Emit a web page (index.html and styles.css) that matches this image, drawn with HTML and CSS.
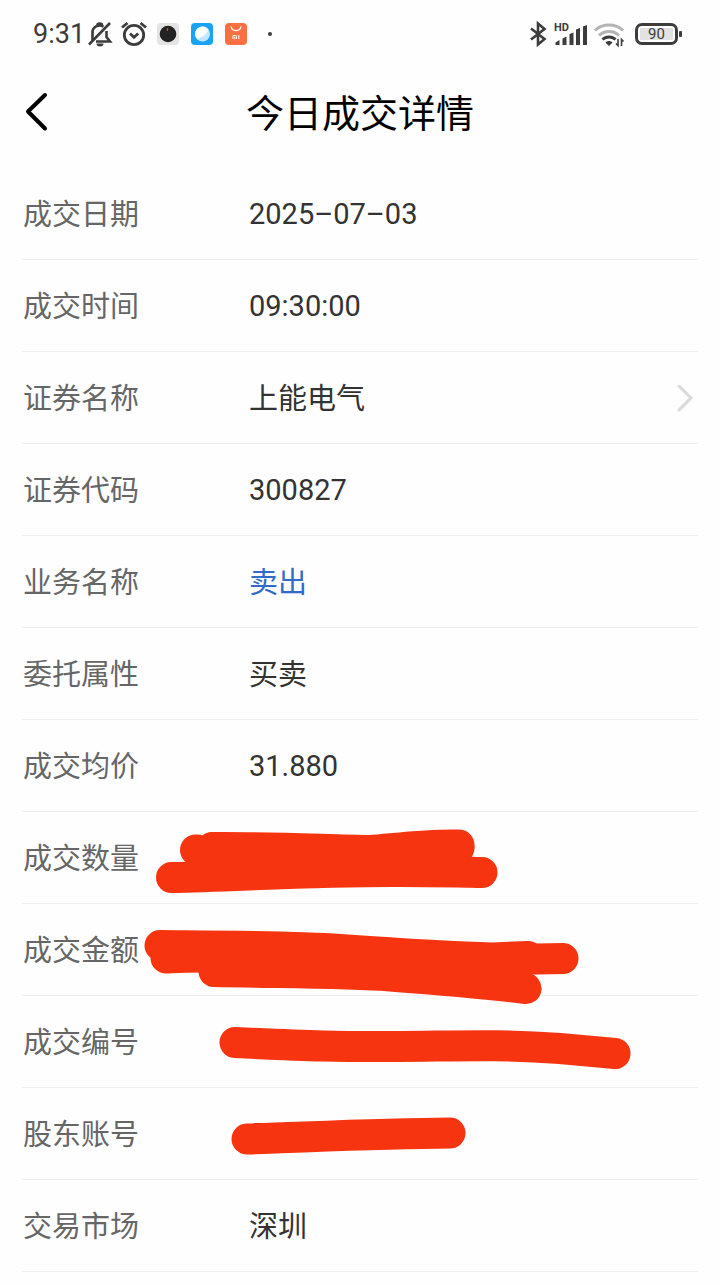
FILE: index.html
```html
<!DOCTYPE html>
<html lang="zh-CN">
<head>
  <meta charset="UTF-8" />
  <meta name="viewport" content="width=device-width, initial-scale=1" />
  <title>今日成交详情</title>
  <link rel="stylesheet" href="styles.css">
</head>
<body>
  <!-- status bar -->
  <div class="status-bar">
    <div class="status-left">
      <span class="time">9:31</span>
      <svg class="icon" width="21" height="26" viewBox="0 0 21 26" fill="none" stroke="#3c3c3c" stroke-width="2.600">
        <path d="M4.500 19.500V12a7 7 0 0 1 11-6.200M18.500 10v6l3.500 4.500H8" />
        <path d="M9.500 4c0-2 4.500-2 4.500 0" />
        <path d="M1 23.500 22 2" />
        <path d="M8.500 22.500h7a3.500 3 0 0 1-7 0z" fill="#3c3c3c" stroke="none" />
      </svg>
      <svg class="icon" width="24" height="26" viewBox="0 0 24 26" fill="none" stroke="#3c3c3c" stroke-width="2.800">
        <circle cx="13" cy="14" r="9.700" />
        <path d="M1 6.500 6.500 2M19.500 2 25 6.500" />
        <path d="m9 12.500 4 3.800 4.200-3.800" />
      </svg>
      <svg class="icon" width="22" height="22" viewBox="0 0 22 22">
        <rect width="22" height="22" rx="4" fill="#e4e4e4" />
        <circle cx="11" cy="11" r="8.300" fill="#232323" />
        <path d="M10.500 5v3" stroke="#e23c38" stroke-width="1.300" />
      </svg>
      <svg class="icon" width="22" height="22" viewBox="0 0 22 22">
        <rect width="22" height="22" rx="4" fill="#1aa3f5" />
        <circle cx="11.500" cy="11" r="7.500" fill="#c4e7fd" />
        <path d="M4.300 13A7.500 7.500 0 0 1 17.500 6.500C16.500 10 11 15 5.800 15.800z" fill="#fff" />
      </svg>
      <svg class="icon" width="22" height="22" viewBox="0 0 22 22" fill="none" stroke="#fff">
        <rect width="22" height="22" rx="4" fill="#fb7043" stroke="none" />
        <path d="M6 3.500c1 5.500 9 5.500 10 0" stroke-width="1.300" />
        <path d="M8 16v-3.500h2.500c.7 0 1 .3 1 1V16M9.800 13.800V16M13.800 12v4" stroke-width="1" />
      </svg>
      <span class="more-dot"></span>
    </div>
    <div class="status-right">
      <svg class="icon" width="18" height="26" viewBox="0 0 18 26" fill="none" stroke="#3c3c3c" stroke-width="2.600">
        <path d="M2 7.500 15.500 18 9 23.500v-21L15.500 8 2 18.500" />
      </svg>
      <svg class="icon" width="34" height="26" viewBox="0 0 34 26" fill="#3c3c3c">
        <text class="hd" x="0" y="10">HD</text>
        <path d="M1.500 24v-2.500L5.500 19v5zM8.500 24v-6.500l4-2V24zM15.500 24V13l4-1.500V24zM22 24V8.500L26 7v17zM29 24V5.500L33 4v20z" />
      </svg>
      <svg class="icon" width="33" height="26" viewBox="2 0 33 26" fill="none" stroke-width="3">
        <path d="M2 9.500c7.500-7.300 20.500-7.300 28 0" stroke="#b4b4b4" />
        <path d="M6 14.500c5.500-5.300 14.500-5.300 20 0" stroke="#b4b4b4" />
        <path d="M9.500 18.500c3.500-3.500 9.500-3.500 13 0" stroke="#3c3c3c" />
        <path d="M12.500 21.500c1.800-2 5.200-2 7 0L16 25z" fill="#3c3c3c" />
        <path d="M25 18v6.500l-2-2M28.500 25v-6.500l2 2" stroke="#3c3c3c" stroke-width="1.600" />
      </svg>
      <span class="battery"><span class="battery-level">90</span></span>
    </div>
  </div>

  <header class="header">
    <button class="back" type="button" aria-label="返回">
      <svg width="24" height="40" viewBox="0 0 24 40" fill="none" stroke="#000" stroke-width="4" stroke-linecap="round" stroke-linejoin="round">
        <path d="M21 3 4 19.500l17 17" />
      </svg>
    </button>
    <h1>今日成交详情</h1>
  </header>

  <dl class="detail">
    <div class="row"><dt>成交日期</dt><dd>2025–07–03</dd></div>
    <div class="row"><dt>成交时间</dt><dd>09:30:00</dd></div>
    <div class="row">
      <dt>证券名称</dt>
      <dd class="text">
        <a class="stock-link" href="#">
          上能电气
          <svg width="18" height="28" viewBox="0 0 18 28" fill="none" stroke="#d9d9d9" stroke-width="3" stroke-linecap="round" stroke-linejoin="round">
            <path d="m3 1 12 12L3 25" />
          </svg>
        </a>
      </dd>
    </div>
    <div class="row"><dt>证券代码</dt><dd>300827</dd></div>
    <div class="row"><dt>业务名称</dt><dd class="text sell">卖出</dd></div>
    <div class="row"><dt>委托属性</dt><dd class="text">买卖</dd></div>
    <div class="row"><dt>成交均价</dt><dd>31.880</dd></div>
    <!-- hidden values, covered with marker strokes -->
    <div class="row">
      <dt>成交数量</dt>
      <dd>
        <svg class="marker" width="676" height="92" viewBox="22 812 676 92">
          <path d="M171.500 877.500C240 876 320 871 400 871.500S460 872 482 872.500" />
          <path d="M195.500 850h2" />
          <path d="M212 847.500C270 847 330 850 370 850.500C400 848 430 844 459 845" />
          <path d="M210 855C300 862 400 862 459 848" />
        </svg>
      </dd>
    </div>
    <div class="row">
      <dt>成交金额</dt>
      <dd>
        <svg class="marker" width="676" height="92" viewBox="22 904 676 92">
          <path d="M160 945.500C220 946 290 946 340 949.500S450 957 492 958L528 956.500" />
          <path d="M166 958C250 953 400 962 563 958.500" />
          <path d="M214 971.500C280 973 350 973 390 976S490 984 526 988.500" />
        </svg>
      </dd>
    </div>
    <div class="row">
      <dt>成交编号</dt>
      <dd>
        <svg class="marker" width="676" height="92" viewBox="22 996 676 92">
          <path class="ink" d="M335 1032h5M352 1032h6M369 1032h6M388 1032h7" />
          <path d="M235 1042.500C310 1046 340 1047 400 1046.500S500 1044 560 1048.500L615 1053.500" />
        </svg>
      </dd>
    </div>
    <div class="row">
      <dt>股东账号</dt>
      <dd>
        <svg class="marker" width="676" height="92" viewBox="22 1088 676 92">
          <path class="ink" d="M255 1124h6" />
          <path d="M247 1139C310 1137 380 1133.500 450 1133" />
        </svg>
      </dd>
    </div>
    <div class="row"><dt>交易市场</dt><dd class="text">深圳</dd></div>
  </dl>
</body>
</html>
```

FILE: styles.css
```css
* {
  box-sizing: border-box;
}

body {
  margin: 0;
  background: #fefefe;
  color: #333;
  font-family: Roboto, "Noto Sans CJK SC", sans-serif;
}

.status-bar {
  display: flex;
  justify-content: space-between;
  align-items: center;
  height: 68px;
  padding: 0 38px 0 33px;
  color: #3c3c3c;
}

.status-left,
.status-right {
  display: flex;
  align-items: center;
}

.status-left {
  gap: 12px;
}

.status-right {
  gap: 7px;
}

.icon {
  display: block;
  overflow: visible;
}

.time {
  font-size: 27px;
  line-height: 32px;
  margin-right: -9px;
}

.more-dot {
  width: 4px;
  height: 4px;
  margin-left: 9px;
  border-radius: 50%;
  background: #3c3c3c;
}

.hd {
  font-size: 11px;
  font-weight: bold;
}

.battery {
  position: relative;
  width: 43px;
  height: 22px;
  padding: 2px;
  border: 3px solid #3c3c3c;
  border-radius: 7px;
  margin-right: 4px;
}

/* battery tip */
.battery::after {
  content: "";
  position: absolute;
  top: 5px;
  right: -7px;
  width: 3px;
  height: 6px;
  border-radius: 1px;
  background: #3c3c3c;
}

.battery-level {
  display: block;
  background: #e2e2e2;
  font-size: 15px;
  line-height: 12px;
  text-align: center;
}

.header {
  display: grid;
  grid-template-columns: 1fr auto 1fr;
  align-items: center;
  height: 88px;
  padding: 0 24px;
}

.back {
  justify-self: start;
  padding: 0;
  border: 0;
  background: none;
  cursor: pointer;
}

.back svg {
  display: block;
}

h1 {
  margin: 0;
  padding-top: 3px;
  color: #000;
  font-size: 38px;
  font-weight: normal;
  line-height: 56px;
}

.detail {
  margin: 12px 0 0;
  padding: 0 22px;
}

.row {
  position: relative;
  display: flex;
  align-items: center;
  height: 92px;
  border-bottom: 1px solid #efefef;
  font-size: 29px;
  line-height: 44px;
}

dt {
  width: 226px;
  padding: 3px 0 0 1px;
  color: #666;
}

dd {
  flex: 1;
  margin: 0;
  padding-left: 1px;
}

/* Chinese glyphs sit higher than the digits */
.text {
  padding-top: 3px;
}

.sell {
  color: #2f6bc8;
}

.stock-link {
  display: flex;
  justify-content: space-between;
  align-items: center;
  padding-right: 4px;
  color: inherit;
  text-decoration: none;
}

/* drawn over the row, may run past its edges */
.marker {
  position: absolute;
  top: 0;
  left: 0;
  z-index: 1;
  overflow: visible;
  fill: none;
  stroke: #f63410;
  stroke-width: 31px;
  stroke-linecap: round;
  stroke-linejoin: round;
}

.marker .ink {
  stroke: #333;
  stroke-width: 2px;
}
```
